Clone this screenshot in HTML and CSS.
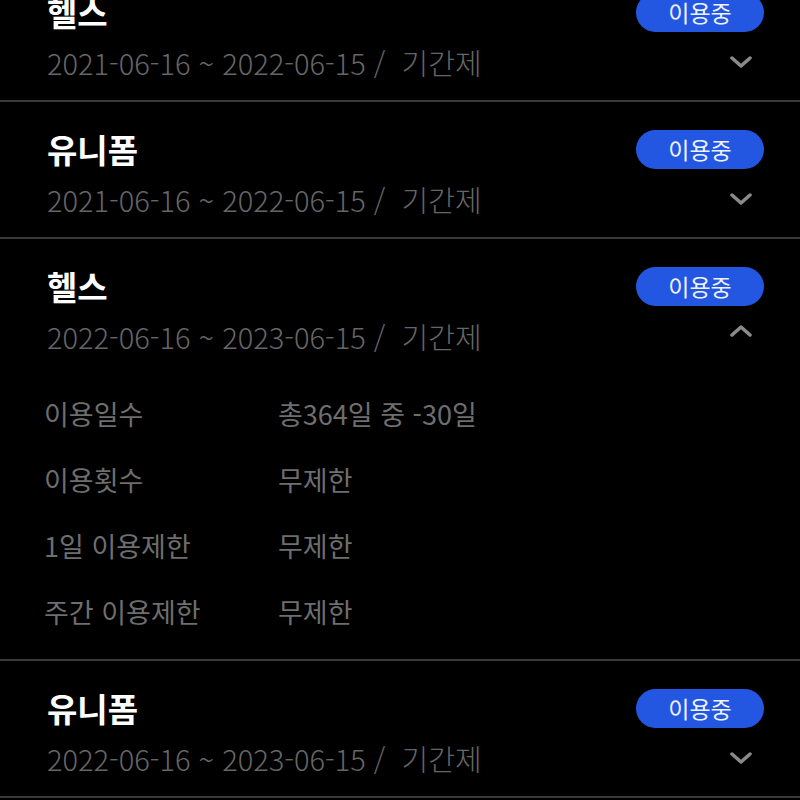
FILE: index.html
```html
<!DOCTYPE html>
<html lang="ko">
<head>
<meta charset="utf-8">
<link rel="stylesheet" href="styles.css">
</head>
<body>
<div class="list">
  <div class="item">
    <div class="head"><span class="title">헬스</span><span class="badge">이용중</span></div>
    <div class="meta"><span class="date">2021-06-16 ~ 2022-06-15 /&nbsp; 기간제</span>
      <svg class="chev" width="22" height="13" viewBox="0 0 22 13"><polyline points="2,2 11,10 20,2" fill="none" stroke="#8a8a8a" stroke-width="3.5" stroke-linecap="round" stroke-linejoin="round"/></svg>
    </div>
  </div>
  <div class="item">
    <div class="head"><span class="title">유니폼</span><span class="badge">이용중</span></div>
    <div class="meta"><span class="date">2021-06-16 ~ 2022-06-15 /&nbsp; 기간제</span>
      <svg class="chev" width="22" height="13" viewBox="0 0 22 13"><polyline points="2,2 11,10 20,2" fill="none" stroke="#8a8a8a" stroke-width="3.5" stroke-linecap="round" stroke-linejoin="round"/></svg>
    </div>
  </div>
  <div class="item open">
    <div class="head"><span class="title">헬스</span><span class="badge">이용중</span></div>
    <div class="meta"><span class="date">2022-06-16 ~ 2023-06-15 /&nbsp; 기간제</span>
      <svg class="chev up" width="22" height="13" viewBox="0 0 22 13"><polyline points="2,11 11,3 20,11" fill="none" stroke="#8a8a8a" stroke-width="3.5" stroke-linecap="round" stroke-linejoin="round"/></svg>
    </div>
    <div class="details">
      <span class="label">이용일수</span><span class="value">총364일 중 -30일</span>
      <span class="label">이용횟수</span><span class="value">무제한</span>
      <span class="label">1일 이용제한</span><span class="value">무제한</span>
      <span class="label">주간 이용제한</span><span class="value">무제한</span>
    </div>
  </div>
  <div class="item">
    <div class="head"><span class="title">유니폼</span><span class="badge">이용중</span></div>
    <div class="meta"><span class="date">2022-06-16 ~ 2023-06-15 /&nbsp; 기간제</span>
      <svg class="chev" width="22" height="13" viewBox="0 0 22 13"><polyline points="2,2 11,10 20,2" fill="none" stroke="#8a8a8a" stroke-width="3.5" stroke-linecap="round" stroke-linejoin="round"/></svg>
    </div>
  </div>
</div>
</body>
</html>
```
FILE: styles.css
```css
html, body {
  margin: 0;
  padding: 0;
  background: #000;
  overflow: hidden;
  height: 800px;
}
body {
  font-family: "Noto Sans CJK KR", "Noto Sans", sans-serif;
}
.list {
  margin-top: -35px;
}
.item {
  padding: 28px 36px 18px 47px;
  border-bottom: 2px solid #3a3a3a;
}
.head {
  display: flex;
  align-items: center;
  justify-content: space-between;
  height: 39px;
}
.title {
  color: #fff;
  font-size: 33px;
  font-weight: 700;
  line-height: 39px;
}
.badge {
  width: 128px;
  height: 39px;
  border-radius: 20px;
  background: #2457e1;
  color: #eef2ff;
  font-size: 23px;
  line-height: 39px;
  text-align: center;
}
.meta {
  margin-top: 10px;
  height: 40px;
  display: flex;
  align-items: center;
  justify-content: space-between;
}
.date {
  color: #666;
  font-size: 29px;
  font-weight: 300;
  line-height: 40px;
  letter-spacing: 0;
}
.chev {
  margin-right: 12px;
  margin-top: 0;
}
.chev.up {
  margin-top: -12px;
}
.open {
  padding-bottom: 14px;
}
.details {
  margin-top: 25px;
  margin-left: -3px;
  display: grid;
  grid-template-columns: 234px 1fr;
  grid-auto-rows: 66px;
  align-items: center;
}
.label, .value {
  color: #6e6e6e;
  font-size: 27px;
  line-height: 40px;
}
```
